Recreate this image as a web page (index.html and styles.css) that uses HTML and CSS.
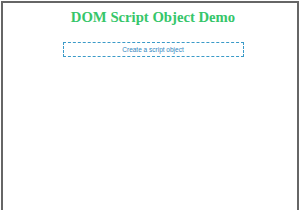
FILE: index.html
```html
<!DOCTYPE html>
<html lang="en">
<head>
    <meta charset="UTF-8">
    <meta name="viewport" content="width=device-width, initial-scale=1.0">
    <title>DOM Script Object Demo</title>
    <link rel="stylesheet" href="styles.css">
</head>
<body>
    <div class="frame">
        <h1 class="title">DOM Script Object Demo</h1>
        <button class="create-btn" type="button">Create a script object</button>
    </div>
</body>
</html>
```

FILE: styles.css
```css
body {
    margin: 0;
    padding: 1px 1px 0 1px;
    background: #fff;
    font-family: "Liberation Sans", Arial, sans-serif;
}
.frame {
    height: 209px;
    border: 2px solid #666;
    border-bottom: none;
    box-sizing: border-box;
    padding-left: 6px;
    display: flex;
    flex-direction: column;
    align-items: center;
}
.title {
    font-family: "Liberation Serif", "Times New Roman", serif;
    font-size: 14.7px;
    font-weight: bold;
    color: #36c66a;
    margin: 5px 0 0 0;
    line-height: 18px;
}
.create-btn {
    width: 181px;
    height: 15px;
    margin-top: 16px;
    padding: 0;
    border: 1px dashed #3a9ac8;
    background: #fff;
    color: #2f86c0;
    font-family: "Liberation Sans", Arial, sans-serif;
    font-size: 6.5px;
}
```
